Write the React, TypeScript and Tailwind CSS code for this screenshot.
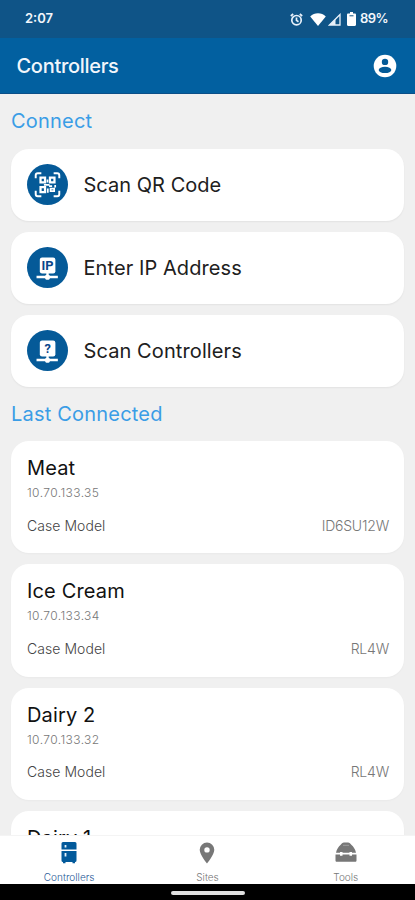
import type { ReactNode } from "react";

function AlarmIcon() {
  return (
    <svg width="13" height="13" viewBox="0 0 13 13" fill="none" stroke="#e8f1fa" strokeWidth="1.7">
      <circle cx="6.5" cy="7.2" r="4.7" />
      <path d="M6.5 4.6v2.8l2 1.3M0.8 3l2.4-2M12.2 3L9.8 1" />
    </svg>
  );
}

function WifiIcon() {
  return (
    <svg width="16" height="13" viewBox="0 0 16 13" fill="#fff">
      <path d="M8 13L0.2 3.6C2.4 1.4 5 .3 8 .3s5.600 1.100 7.800 3.300z" />
    </svg>
  );
}

function SignalIcon() {
  return (
    <svg width="13" height="13" viewBox="0 0 13 13">
      <path d="M12 1.500V12H1.500z" fill="none" stroke="#e8f1fa" strokeWidth="1.300" />
      <path d="M7.500 6V12H1.500z" fill="#e8f1fa" />
    </svg>
  );
}

function BatteryIcon() {
  return (
    <svg width="9" height="14" viewBox="0 0 9 14" fill="#fff">
      <path d="M3 0h3v1.500h1.800c.7 0 1.200.5 1.200 1.200v10c0 .7-.5 1.200-1.200 1.200H1.200C.5 13.900 0 13.400 0 12.700v-10C0 2 .5 1.500 1.200 1.500H3z" />
      <path d="M2.500 3.800h4" stroke="#0f5487" />
    </svg>
  );
}

function AccountIcon() {
  return (
    <svg width="24" height="24" viewBox="0 0 24 24">
      <circle cx="12" cy="12" r="11.300" fill="#fff" />
      <circle cx="12" cy="7.900" r="3.200" fill="#035a97" />
      <ellipse cx="12" cy="15.900" rx="6.300" ry="3.200" fill="#035a97" />
    </svg>
  );
}

function QrIcon() {
  return (
    <svg width="41" height="41" viewBox="0 0 40 40">
      <circle cx="20" cy="20" r="20" fill="#055a98" />
      <g fill="none" stroke="#fff" strokeWidth="1.900">
        <path d="M8.500 14V11a2 2 0 0 1 2-2h3.500M26 9h3.500a2 2 0 0 1 2 2v3M31.500 26v3.500a2 2 0 0 1-2 2H26M14 31.500h-3.500a2 2 0 0 1-2-2V26" />
        <path d="M13.200 13.200h4.400v4.800h-4.400zM22.400 13.200H26.800v4.800h-4.400zM13.200 22.600h4.400v4.800h-4.400z" strokeWidth="2.200" />
        <path d="M20 15v3M16.500 20.300h5.500M21.500 21.500h3M20.300 24v4M23 24h3.500v2.500h-3.500zM27.500 20.500v2.500" strokeWidth="1.700" />
      </g>
    </svg>
  );
}

function NetworkIcon({ label }: { label: string }) {
  return (
    <svg width="41" height="41" viewBox="0 0 40 40">
      <circle cx="20" cy="20" r="20" fill="#055a98" />
      <rect x="12.500" y="10.300" width="15.200" height="15.500" rx="2.200" fill="#fff" />
      <path d="M20 25v4M9.300 29.300h20.800" stroke="#fff" strokeWidth="2.300" />
      <circle cx="20" cy="29.400" r="2.500" fill="#fff" />
      <text
        x="20.100"
        y="22.500"
        textAnchor="middle"
        fill="#07468b"
        fontFamily="Roboto, sans-serif"
        fontWeight="700"
        fontSize="12.500"
      >
        {label}
      </text>
    </svg>
  );
}

function FridgeIcon() {
  return (
    <svg width="16" height="22" viewBox="0 0 16 22">
      <path d="M2 0h12a1.500 1.500 0 0 1 1.500 1.500V7.500H.5v-6A1.500 1.500 0 0 1 2 0zM.5 9h15v9.500a1.500 1.500 0 0 1-1.500 1.500V21.300h-2.500V20h-7v1.300H2V20a1.500 1.500 0 0 1-1.500-1.500z" fill="#035a9b" />
      <path d="M4.500 3v2.500M4.500 11v3.500" stroke="#e5f2fb" strokeWidth="1.800" />
    </svg>
  );
}

function PinIcon() {
  return (
    <svg width="16" height="22" viewBox="0 0 16 22">
      <path
        fillRule="evenodd"
        d="M8 .5a7.300 7.300 0 0 0-7.300 7.300C.7 13 8 21.500 8 21.500S15.300 13 15.300 7.800A7.300 7.300 0 0 0 8 .5zm0 4.700a2.700 2.700 0 1 1 0 5.400 2.700 2.700 0 0 1 0-5.400z"
        fill="#777"
      />
    </svg>
  );
}

function ToolboxIcon() {
  return (
    <svg width="22" height="22" viewBox="0 0 22 22" fill="#777">
      <path d="M1 10.800C1.700 7.500 3.500 4.500 5.700 2.800 6.500 1.500 7.500.5 9 .5h4c1.500 0 2.500 1 3.300 2.300 2.200 1.700 4 4.700 4.700 8h-4v-.8h-2.500v.8H7.500v-.8H5v.8z" />
      <path d="M.5 12.500H5v1.300h2.500v-1.300h7v1.300H17v-1.300h4.500v6c0 .8-.5 1.300-1.300 1.300H1.800C1 19.800.5 19.300.5 18.500z" />
      <path d="M8 3.300h6" stroke="#aaa" strokeWidth=".8" />
    </svg>
  );
}

function ActionCard({ icon, label, className }: { icon: ReactNode; label: string; className: string }) {
  return (
    <div className="flex h-[72px] shrink-0 items-center gap-[16px] rounded-[18px] bg-white pl-[15.5px] shadow-[0_1px_2px_rgba(0,0,0,0.06)]">
      {icon}
      <div className={`text-[20px] whitespace-nowrap text-[#202020] ${className}`}>{label}</div>
    </div>
  );
}

const devices = [
  { name: "Meat", ip: "10.70.133.35", model: "ID6SU12W" },
  { name: "Ice Cream", ip: "10.70.133.34", model: "RL4W" },
  { name: "Dairy 2", ip: "10.70.133.32", model: "RL4W" },
];

function DeviceCard({ name, ip, model }: { name: string; ip?: string; model?: string }) {
  return (
    <div className="h-[112.3px] shrink-0 rounded-[18px] bg-white px-4 pt-[14px] shadow-[0_1px_2px_rgba(0,0,0,0.03)]">
      <div className="text-[20px] leading-[26px] tracking-[0.15px] text-[#111]">{name}</div>
      {ip && (
        <div className="mt-[5px] text-[12px] leading-[14px] font-light tracking-[0.4px] text-[#777]">{ip}</div>
      )}
      {model && (
        <div className="-mr-px mt-[15.5px] flex justify-between text-[14px] leading-[20px] font-light text-[#444]">
          <span className="tracking-[0.05px]">Case Model</span>
          <span className="tracking-[-0.2px] text-[#777]">{model}</span>
        </div>
      )}
    </div>
  );
}

function NavItem({ icon, label, className }: { icon: ReactNode; label: string; className: string }) {
  return (
    <div className={`flex flex-1 flex-col items-center pt-[6px] ${className}`}>
      {icon}
      <div className="mt-[7px] text-[10px] leading-[13px] font-light">{label}</div>
    </div>
  );
}

export default function App() {
  return (
    <div className="flex h-[900px] w-[415px] flex-col overflow-hidden bg-[#f0f0f0] font-['Inter',sans-serif]">
      <div className="flex h-[38px] shrink-0 items-center bg-[#0f5487] pl-[25px] text-[#f2f6fb]">
        <div className="text-[13px] font-semibold">2:07</div>
        <div className="ml-auto flex items-center pr-[27px]">
          <AlarmIcon />
          <div className="ml-[7px]"><WifiIcon /></div>
          <div className="ml-[2px]"><SignalIcon /></div>
          <div className="ml-[6px]"><BatteryIcon /></div>
          <div className="ml-[4px] text-[13px] font-semibold tracking-[-0.6px]">89%</div>
        </div>
      </div>

      <div className="flex h-[56px] shrink-0 items-center justify-between border-b border-[#0b4f88] bg-[#0260a0] pr-[18.5px] pl-[16.5px]">
        <div className="text-[20px] font-medium tracking-[-0.3px] text-[#f2f6fb]">Controllers</div>
        <AccountIcon />
      </div>

      <div className="flex min-h-0 flex-1 flex-col overflow-hidden px-[11px]">
        <div className="h-[54.5px] shrink-0 pt-[14px] text-[20px] leading-[26px] tracking-[0.2px] text-[#3a9de6]">Connect</div>
        <div className="flex flex-col gap-[11px]">
          <ActionCard icon={<QrIcon />} label="Scan QR Code" className="tracking-[0.03px]" />
          <ActionCard icon={<NetworkIcon label="IP" />} label="Enter IP Address" className="tracking-[0.08px]" />
          <ActionCard icon={<NetworkIcon label="?" />} label="Scan Controllers" className="tracking-[0.1px]" />
        </div>
        <div className="h-[54.6px] shrink-0 pt-[14.5px] text-[20px] leading-[26px] tracking-[0.2px] text-[#3a9de6]">Last Connected</div>
        <div className="flex flex-col gap-[11px]">
          {devices.map((d) => (
            <DeviceCard key={d.name} {...d} />
          ))}
          <DeviceCard name="Dairy 1" />
        </div>
      </div>

      <div className="flex h-[49px] shrink-0 border-t border-[#f4f4f4] bg-white">
        <NavItem icon={<FridgeIcon />} label="Controllers" className="text-[#2a5a98]" />
        <NavItem icon={<PinIcon />} label="Sites" className="text-[#777]" />
        <NavItem icon={<ToolboxIcon />} label="Tools" className="text-[#777]" />
      </div>

      <div className="flex h-4 shrink-0 justify-center bg-black pt-[7px]">
        <div className="h-1 w-[74px] rounded-full bg-[#e0e0e0]" />
      </div>
    </div>
  );
}
